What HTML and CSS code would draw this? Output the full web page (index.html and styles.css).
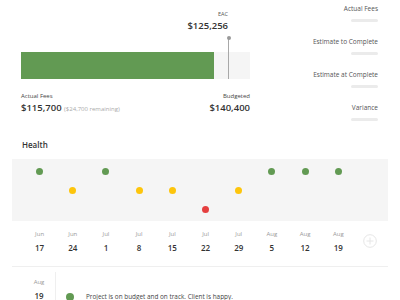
FILE: index.html
```html
<!DOCTYPE html>
<html lang="en">
<head>
    <meta charset="UTF-8">
    <meta name="viewport" content="width=device-width, initial-scale=1.0">
    <title>Project Health</title>
    <link rel="stylesheet" href="styles.css">
</head>
<body>
    <!-- Budget summary -->
    <div class="top">
        <div class="budget">
            <div class="eac" style="width: 90.4%;">
                <div class="eac-label">EAC</div>
                <div class="amount">$125,256</div>
            </div>
            <div class="track">
                <div class="fill" style="width: 84.3%;"></div>
                <div class="marker" style="left: 90.4%;"></div>
            </div>
            <div class="totals">
                <div>
                    <div class="small-label">Actual Fees</div>
                    <div class="amount">$115,700 <span class="remaining">($24,700 remaining)</span></div>
                </div>
                <div class="right">
                    <div class="small-label">Budgeted</div>
                    <div class="amount">$140,400</div>
                </div>
            </div>
        </div>

        <div class="stats">
            <div class="stat">
                <div class="stat-label">Actual Fees</div>
                <div class="stat-bar"></div>
            </div>
            <div class="stat">
                <div class="stat-label">Estimate to Complete</div>
                <div class="stat-bar"></div>
            </div>
            <div class="stat">
                <div class="stat-label">Estimate at Complete</div>
                <div class="stat-bar"></div>
            </div>
            <div class="stat">
                <div class="stat-label">Variance</div>
                <div class="stat-bar"></div>
            </div>
        </div>
    </div>

    <!-- Health -->
    <div class="health">
        <h2>Health</h2>
        <div class="panel">
            <div class="week"><span class="dot good"></span></div>
            <div class="week"><span class="dot warn"></span></div>
            <div class="week"><span class="dot good"></span></div>
            <div class="week"><span class="dot warn"></span></div>
            <div class="week"><span class="dot warn"></span></div>
            <div class="week"><span class="dot bad"></span></div>
            <div class="week"><span class="dot warn"></span></div>
            <div class="week"><span class="dot good"></span></div>
            <div class="week"><span class="dot good"></span></div>
            <div class="week"><span class="dot good"></span></div>
        </div>

        <div class="dates">
            <div class="date"><span class="month">Jun</span><span class="day">17</span></div>
            <div class="date"><span class="month">Jun</span><span class="day">24</span></div>
            <div class="date"><span class="month">Jul</span><span class="day">1</span></div>
            <div class="date"><span class="month">Jul</span><span class="day">8</span></div>
            <div class="date"><span class="month">Jul</span><span class="day">15</span></div>
            <div class="date"><span class="month">Jul</span><span class="day">22</span></div>
            <div class="date"><span class="month">Jul</span><span class="day">29</span></div>
            <div class="date"><span class="month">Aug</span><span class="day">5</span></div>
            <div class="date"><span class="month">Aug</span><span class="day">12</span></div>
            <div class="date"><span class="month">Aug</span><span class="day">19</span></div>
            <div class="add">
                <svg width="14" height="14" viewBox="0 0 14 14">
                    <circle cx="7" cy="7" r="6.3" fill="none" stroke="#e6e6e6" stroke-width="1"/>
                    <path d="M7 3.5v7M3.5 7h7" stroke="#e6e6e6" stroke-width="1"/>
                </svg>
            </div>
        </div>

        <div class="entry">
            <div class="entry-date">
                <span class="month">Aug</span>
                <span class="day">19</span>
            </div>
            <div class="entry-body">
                <span class="dot good"></span>
                <p>Project is on budget and on track. Client is happy.</p>
            </div>
        </div>
    </div>
</body>
</html>
```

FILE: styles.css
```css
/* General Reset */
* {
    margin: 0;
    padding: 0;
    box-sizing: border-box;
}

body {
    font-family: 'Open Sans', 'Liberation Sans', sans-serif;
    background-color: #fff;
    color: #333;
    overflow: hidden;
}

/* Top Section */
.top {
    display: flex;
}

.budget {
    width: 229px;
    margin-left: 21px;
    padding-top: 10px;
}

.eac {
    text-align: right;
}

.eac-label {
    font-size: 5.5px;
    line-height: 9px;
    color: #555;
}

.amount {
    font-size: 9.5px;
    font-weight: 600;
    line-height: 14px;
    color: #333;
}

.track {
    position: relative;
    height: 27px;
    margin-top: 19px;
    background-color: #f5f5f5;
}

.fill {
    height: 100%;
    background-color: #629a53;
}

/* EAC line over the bar */
.marker {
    position: absolute;
    top: -15px;
    bottom: 0;
    width: 1px;
    background-color: #a8a8a8;
}

.marker::before {
    content: '';
    position: absolute;
    top: -1px;
    left: -1.5px;
    width: 4px;
    height: 4px;
    border-radius: 50%;
    background-color: #999;
}

.totals {
    display: flex;
    justify-content: space-between;
    margin-top: 13px;
}

.totals .right {
    text-align: right;
}

.small-label {
    font-size: 6px;
    line-height: 9px;
    color: #444;
}

.remaining {
    font-size: 6px;
    font-weight: 400;
    color: #aaa;
}

/* Stats Column */
.stats {
    flex: 1;
    padding: 4px 22px 0 0;
    display: flex;
    flex-direction: column;
    align-items: flex-end;
    gap: 15px;
}

.stat {
    display: flex;
    flex-direction: column;
    align-items: flex-end;
    gap: 6px;
}

.stat-label {
    font-size: 6.5px;
    line-height: 9px;
    color: #555;
}

.stat-bar {
    width: 27px;
    height: 3px;
    border-radius: 2px;
    background-color: #ebebeb;
}

/* Health */
.health {
    padding: 0 12px;
    margin-top: 18px;
}

.health h2 {
    font-size: 8px;
    font-weight: 600;
    line-height: 12px;
    padding-left: 10px;
    color: #333;
}

.panel {
    display: grid;
    grid-template-columns: repeat(11, 33.2px);
    height: 62px;
    margin-top: 8px;
    padding: 3px 0 2px 11px;
    background-color: #f5f5f5;
}

.week {
    display: grid;
    grid-template-rows: repeat(3, 19px);
    justify-items: center;
    align-items: center;
}

.dot {
    display: block;
    width: 7px;
    height: 7px;
    border-radius: 50%;
}

.dot.good {
    grid-row: 1;
    background-color: #629a53;
}

.dot.warn {
    grid-row: 2;
    background-color: #fdc50c;
}

.dot.bad {
    grid-row: 3;
    background-color: #e53f3f;
}

/* Dates */
.dates {
    display: grid;
    grid-template-columns: repeat(11, 33.2px);
    padding-left: 11px;
    margin-top: 8px;
}

.date {
    display: flex;
    flex-direction: column;
    align-items: center;
}

.month {
    font-size: 6px;
    line-height: 10px;
    color: #999;
}

.day {
    font-size: 8px;
    font-weight: 600;
    line-height: 10px;
    margin-top: 4px;
    color: #333;
}

.add {
    display: flex;
    justify-content: flex-start;
    align-items: center;
    padding-left: 8px;
}

/* Log Entry */
.entry {
    display: flex;
    border-top: 1px solid #efefef;
    margin-top: 13px;
}

.entry-date {
    display: flex;
    flex-direction: column;
    align-items: center;
    width: 33px;
    height: 40px;
    margin: 5px 0 0 11px;
    padding-top: 5px;
    border-right: 1px solid #efefef;
}

.entry-body {
    display: flex;
    align-items: center;
    padding-top: 15px;
    line-height: 10px;
}

.entry-body .dot {
    width: 8px;
    height: 8px;
    margin: 0 12px 0 10px;
}

.entry-body p {
    font-size: 6.4px;
    color: #444;
}
```
